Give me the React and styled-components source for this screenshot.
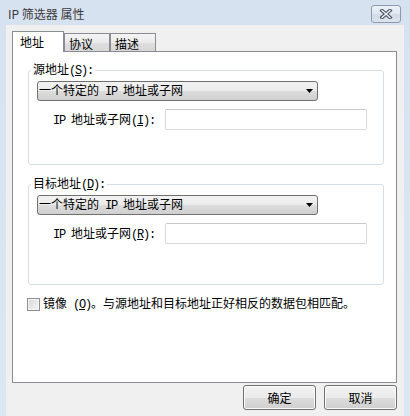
import React from "react";
import styled, { createGlobalStyle } from "styled-components";

const Global = createGlobalStyle`
  html, body { margin: 0; padding: 0; width: 410px; height: 416px; overflow: hidden; }
  body { font-family: "Noto Sans CJK SC", sans-serif; font-size: 12px; color: #000; }
  * { box-sizing: border-box; }
`;

const MONO = `"Liberation Mono", "Noto Sans CJK SC", monospace`;

const Ascii = styled.span`
  font-family: "Liberation Mono", monospace;
  letter-spacing: -1.2px;
`;

const Window = styled.div`
  width: 410px;
  height: 416px;
  background: linear-gradient(#d7e2f0, #dce7f4);
  display: flex;
  flex-direction: column;
`;

const TitleBar = styled.div`
  height: 25px;
  flex: none;
  display: flex;
  align-items: flex-start;
  justify-content: space-between;
  padding: 5px 9px 0 8px;
`;

const Title = styled.div`
  font-family: "Noto Sans CJK SC", sans-serif;
  font-size: 12px;
  line-height: 18px;
  color: #3a3a3a;
`;

const CloseButton = styled.div`
  width: 30px;
  height: 18px;
  border: 1px solid #8d99ac;
  border-radius: 3px;
  background: linear-gradient(#eef2f8, #dfe6f0 50%, #d3dbe7 51%, #dbe3ee);
  display: flex;
  align-items: center;
  justify-content: center;
`;

const Client = styled.div`
  flex: 1;
  margin: 0 6px;
  background: #f0f0f0;
  padding: 6px 7px 0 6px;
  display: flex;
  flex-direction: column;
`;

const TabStrip = styled.div`
  height: 20px;
  display: flex;
  align-items: flex-end;
  position: relative;
  z-index: 1;
`;

const Tab = styled.div`
  border: 1px solid #898c95;
  border-bottom: none;
  line-height: 14px;
  ${(p) =>
    p.$active
      ? `
    width: 52px;
    height: 21px;
    margin-bottom: -1px;
    background: #fff;
    padding: 3px 0 0 7px;
  `
      : `
    width: 46px;
    height: 18px;
    background: linear-gradient(#f4f4f4, #ebebeb 50%, #dedede 51%, #d8d8d8);
    padding: 3px 0 0 4px;
  `}
`;

const Panel = styled.div`
  height: 332px;
  flex: none;
  border: 1px solid #898c95;
  background: #fff;
  padding: 10px 12px 0 15px;
  display: flex;
  flex-direction: column;
`;

const Group = styled.fieldset`
  margin: 0;
  margin-top: ${(p) => p.$top || 0}px;
  padding: 0;
  width: 356px;
  height: ${(p) => p.$height}px;
  border: 1px solid #d5dfe5;
  border-radius: 3px;
  min-width: 0;
`;

const Legend = styled.legend`
  margin-left: 2px;
  padding: 0 2px;
  line-height: 14px;
  font-size: 12px;
`;

const Dropdown = styled.div`
  margin: 3px 0 0 8px;
  width: 281px;
  height: 20px;
  border: 1px solid #707070;
  border-radius: 3px;
  background: linear-gradient(#f2f2f2, #ebebeb 50%, #dddddd 51%, #cfcfcf);
  display: flex;
  align-items: center;
  justify-content: space-between;
  padding: 0 4px 0 1px;
  line-height: 16px;
`;

const FieldRow = styled.div`
  margin-top: 8px;
  padding-left: 24px;
  display: flex;
  align-items: center;
`;

const Label = styled.span`
  width: 112px;
  line-height: 14px;
`;

const TextInput = styled.div`
  width: 202px;
  height: 21px;
  border: 1px solid #d9d9d9;
  border-top-color: #c9c9c9;
  border-radius: 2px;
  background: #fff;
`;

const CheckRow = styled.label`
  margin: 11px 0 0 -1px;
  display: flex;
  align-items: center;
  gap: 3px;
  line-height: 14px;
`;

const CheckBox = styled.span`
  width: 13px;
  height: 13px;
  border: 1px solid #8f8f8f;
  background: linear-gradient(135deg, #d6d6d6, #f7f7f7);
  box-shadow: inset 0 0 0 1px #f4f4f4;
`;

const ButtonRow = styled.div`
  margin-top: 2px;
  display: flex;
  justify-content: flex-end;
  gap: 8px;
`;

const Button = styled.div`
  width: 73px;
  height: 25px;
  border: 1px solid #707070;
  border-radius: 3px;
  background: linear-gradient(#f2f2f2, #ebebeb 50%, #dddddd 51%, #cfcfcf);
  display: flex;
  align-items: center;
  justify-content: center;
  box-shadow: inset 0 0 0 1px #fbfbfb;
`;

const Arrow = () => (
  <svg width="7" height="4" viewBox="0 0 7 4">
    <polygon points="0,0 7,0 3.5,4" fill="#000" />
  </svg>
);

const CloseX = () => (
  <svg width="14" height="10" viewBox="0 0 14 10">
    <path d="M3 1.5 L11 8.5 M11 1.5 L3 8.5" stroke="#4c5563" strokeWidth="3.6" strokeLinecap="square" />
    <path d="M3 1.5 L11 8.5 M11 1.5 L3 8.5" stroke="#eef1f5" strokeWidth="1.4" strokeLinecap="square" />
  </svg>
);

const AddressGroup = ({ legend, hotkey, fieldKey, height, top }) => (
  <Group $height={height} $top={top}>
    <Legend>
      {legend}
      <Ascii>
        (<u>{hotkey}</u>):
      </Ascii>
    </Legend>
    <Dropdown>
      <span>
        一个特定的<Ascii> IP </Ascii>地址或子网
      </span>
      <Arrow />
    </Dropdown>
    <FieldRow>
      <Label>
        <Ascii>IP </Ascii>地址或子网
        <Ascii>
          (<u>{fieldKey}</u>):
        </Ascii>
      </Label>
      <TextInput />
    </FieldRow>
  </Group>
);

export default function App() {
  return (
    <>
      <Global />
      <Window>
        <TitleBar>
          <Title>IP 筛选器 属性</Title>
          <CloseButton>
            <CloseX />
          </CloseButton>
        </TitleBar>
        <Client>
          <TabStrip>
            <Tab $active>地址</Tab>
            <Tab>协议</Tab>
            <Tab>描述</Tab>
          </TabStrip>
          <Panel>
            <AddressGroup legend="源地址" hotkey="S" fieldKey="I" height={103} />
            <AddressGroup legend="目标地址" hotkey="D" fieldKey="R" height={109} top={11} />
            <CheckRow>
              <CheckBox />
              <span>
                镜像
                <Ascii>
                  {" "}(<u>O</u>)
                </Ascii>
                。与源地址和目标地址正好相反的数据包相匹配。
              </span>
            </CheckRow>
          </Panel>
          <ButtonRow>
            <Button>确定</Button>
            <Button>取消</Button>
          </ButtonRow>
        </Client>
      </Window>
    </>
  );
}
